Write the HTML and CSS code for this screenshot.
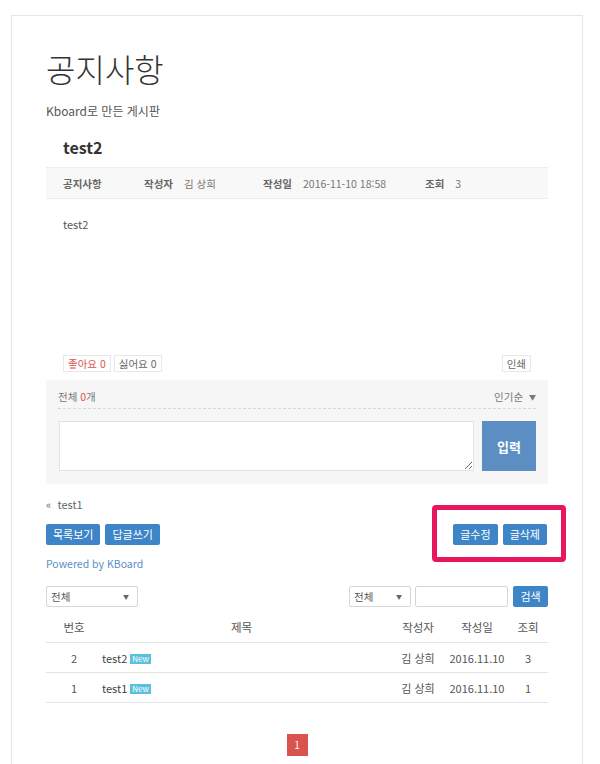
FILE: index.html
```html
<!DOCTYPE html>
<html lang="ko">
<head>
<meta charset="utf-8">
<title>공지사항</title>
<link rel="stylesheet" href="styles.css">
</head>
<body>
<div class="card">
  <h1 class="page-title">공지사항</h1>
  <p class="page-desc">Kboard로 만든 게시판</p>

  <div class="doc">
    <h2 class="doc-title">test2</h2>
    <div class="meta">
      <span class="meta-cat">공지사항</span>
      <span class="meta-item w-author"><b>작성자</b><span>김 상희</span></span>
      <span class="meta-item w-date"><b>작성일</b><span>2016-11-10 18:58</span></span>
      <span class="meta-item"><b>조회</b><span>3</span></span>
    </div>
    <div class="doc-body">test2</div>
    <div class="actions">
      <div class="votes">
        <span class="vote like">좋아요 0</span>
        <span class="vote">싫어요 0</span>
      </div>
      <span class="vote">인쇄</span>
    </div>
  </div>

  <div class="comments">
    <div class="comments-head">
      <span>전체 <em>0</em>개</span>
      <span>인기순 <small>▼</small></span>
    </div>
    <div class="comment-form">
      <textarea class="comment-input"></textarea>
      <button class="comment-submit">입력</button>
    </div>
  </div>

  <div class="prev">«&nbsp; test1</div>

  <div class="btn-row">
    <div class="btn-group">
      <span class="btn">목록보기</span>
      <span class="btn">답글쓰기</span>
    </div>
    <div class="btn-group highlighted">
      <span class="btn">글수정</span>
      <span class="btn">글삭제</span>
      <span class="mark"></span>
    </div>
  </div>

  <div class="powered">Powered by KBoard</div>

  <div class="search-row">
    <div class="select w-cat">전체<small>▼</small></div>
    <div class="search">
      <div class="select w-field">전체<small>▼</small></div>
      <div class="text-input"></div>
      <span class="btn btn-search">검색</span>
    </div>
  </div>

  <table class="list">
    <colgroup>
      <col class="c-num"><col class="c-title"><col class="c-author"><col class="c-date"><col class="c-views">
    </colgroup>
    <thead>
      <tr><th>번호</th><th class="th-title">제목</th><th>작성자</th><th>작성일</th><th>조회</th></tr>
    </thead>
    <tbody>
      <tr><td>2</td><td class="td-title">test2 <span class="new">New</span></td><td>김 상희</td><td>2016.11.10</td><td>3</td></tr>
      <tr><td>1</td><td class="td-title">test1 <span class="new">New</span></td><td>김 상희</td><td>2016.11.10</td><td>1</td></tr>
    </tbody>
  </table>

  <div class="pager"><span class="page">1</span></div>
</div>
</body>
</html>
```

FILE: styles.css
```css
html, body {
  margin: 0;
  padding: 0;
  background: #ffffff;
}
body {
  font-family: "Noto Sans CJK KR", "Noto Sans", sans-serif;
  color: #555;
}
.card {
  margin: 15px 17px 0 11px;
  border: 1px solid #e6e6e6;
  padding: 28px 34px 20px 34px;
  min-height: 760px;
}
.page-title {
  margin: 0;
  font-size: 32px;
  line-height: 48px;
  font-weight: 300;
  color: #333;
}
.page-desc {
  margin: 10px 0 0;
  font-size: 12px;
  line-height: 18px;
  color: #555;
}
.doc-title {
  margin: 15px 0 0;
  padding-left: 17px;
  font-size: 16px;
  line-height: 24px;
  font-weight: 700;
  color: #333;
}
.meta {
  margin-top: 8px;
  height: 30px;
  border-top: 1px solid #ececec;
  border-bottom: 1px solid #ececec;
  background: #f8f8f8;
  display: flex;
  align-items: center;
  padding-left: 17px;
  font-size: 10.5px;
  color: #777;
}
.meta b { font-weight: 700; color: #666; margin-right: 11px; }
.meta-cat { width: 81px; font-weight: 700; color: #666; }
.meta-item { display: flex; }
.w-author { width: 119px; }
.w-date { width: 162px; }
.doc-body {
  height: 156px;
  padding: 17px 0 0 17px;
  box-sizing: border-box;
  font-size: 11px;
  line-height: 16px;
  color: #555;
}
.actions {
  display: flex;
  justify-content: space-between;
  padding: 0 17px;
}
.votes { display: flex; gap: 3px; }
.vote {
  display: inline-block;
  height: 17px;
  line-height: 15px;
  padding: 0 4px;
  border: 1px solid #e8e8e8;
  box-sizing: border-box;
  font-size: 10.5px;
  color: #666;
  background: #fff;
}
.vote.like { color: #d9534f; }
.comments {
  margin-top: 8px;
  background: #f6f6f6;
  padding: 9px 12px 13px;
  height: 104px;
  box-sizing: border-box;
}
.comments-head {
  display: flex;
  justify-content: space-between;
  font-size: 10.5px;
  line-height: 16px;
  color: #777;
  padding: 0 0 3px;
  border-bottom: 1px dashed #d8d8d8;
}
.comments-head em { font-style: normal; color: #e0504a; }
.comments-head small { font-size: 7px; margin-left: 3px; vertical-align: 1px; }
.comment-form {
  display: flex;
  gap: 8px;
  margin-top: 12px;
  padding-left: 1px;
}
.comment-input {
  width: 415px;
  height: 50px;
  box-sizing: border-box;
  border: 1px solid #e2e2e2;
  background: #fff;
  margin: 0;
  padding: 0;
  resize: vertical;
  font-family: inherit;
}
.comment-submit {
  width: 54px;
  height: 50px;
  border: 0;
  background: #5d8ec3;
  color: #fff;
  font-family: inherit;
  font-size: 13px;
  font-weight: 700;
  padding: 0;
}
.prev {
  margin-top: 12px;
  font-size: 11px;
  line-height: 16px;
  color: #666;
}
.btn-row {
  margin-top: 12px;
  display: flex;
  justify-content: space-between;
}
.btn-group {
  display: flex;
  gap: 5px;
  position: relative;
}
.btn {
  display: inline-block;
  height: 21px;
  line-height: 21px;
  padding: 0 7px;
  background: #3d85c6;
  color: #fff;
  font-size: 11px;
  border-radius: 2px;
}
.highlighted { margin-right: 1px; }
.mark {
  position: absolute;
  left: -21px;
  right: -19px;
  top: -19px;
  bottom: -17px;
  border: 5px solid #e8175d;
  border-radius: 4px;
}
.powered {
  margin-top: 11px;
  font-size: 10.5px;
  line-height: 16px;
  color: #5b8fc6;
}
.search-row {
  margin-top: 14px;
  display: flex;
  justify-content: space-between;
}
.select {
  height: 21px;
  box-sizing: border-box;
  border: 1px solid #d6d6d6;
  border-radius: 2px;
  background: #fff;
  font-size: 10.5px;
  line-height: 19px;
  padding: 0 4px;
  color: #555;
  display: flex;
  justify-content: space-between;
}
.select small { font-size: 6px; color: #666; padding-right: 4px; }
.w-cat { width: 92px; }
.w-field { width: 62px; }
.search { display: flex; gap: 4px; }
.text-input {
  width: 93px;
  height: 21px;
  box-sizing: border-box;
  border: 1px solid #d6d6d6;
  border-radius: 2px;
  margin-right: 1px;
}
.btn-search {
  width: 35px;
  padding: 0;
  text-align: center;
}
.list {
  margin-top: 5px;
  width: 100%;
  border-collapse: collapse;
  table-layout: fixed;
  font-size: 11px;
  color: #555;
}
.c-num { width: 56px; }
.c-author { width: 56px; }
.c-date { width: 62px; }
.c-views { width: 40px; }
.list th {
  font-weight: 400;
  height: 28px;
  font-size: 11.5px;
  border-bottom: 1px solid #e4e4e4;
  text-align: center;
  color: #555;
}
.list th.th-title { padding-right: 10px; }
.list td {
  height: 29px;
  border-bottom: 1px solid #e4e4e4;
  text-align: center;
  padding: 0;
}
.list td.td-title { text-align: left; color: #444; }
.new {
  display: inline-block;
  background: #5bc0de;
  color: #fff;
  font-size: 8px;
  line-height: 10px;
  padding: 0 2px;
  vertical-align: 1px;
}
.pager {
  margin-top: 31px;
  display: flex;
  justify-content: center;
}
.page {
  width: 21px;
  height: 22px;
  line-height: 22px;
  text-align: center;
  background: #d9534f;
  color: #fff;
  font-size: 10px;
}
```
